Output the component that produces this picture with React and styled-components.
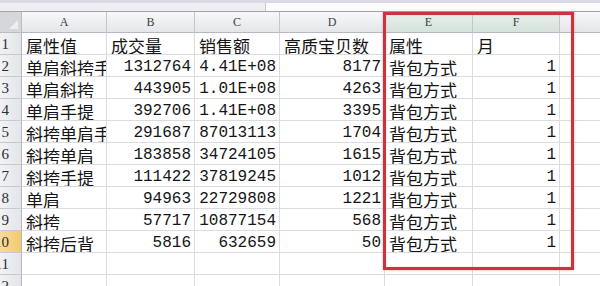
import React from 'react';
import styled, { createGlobalStyle } from 'styled-components';

const GlobalStyle = createGlobalStyle`
  html, body {
    margin: 0;
    padding: 0;
    background: #ffffff;
    overflow: hidden;
  }
  body {
    font-family: "Noto Sans CJK SC", "Liberation Sans", sans-serif;
  }
`

// column widths: row header, A..G
const COLS = [22, 85, 88, 85, 105, 88, 87, 100]
const LETTERS = ['A', 'B', 'C', 'D', 'E', 'F', 'G']
const SELECTED = ['E', 'F']

const rows = [
  ['属性值', '成交量', '销售额', '高质宝贝数', '属性', '月'],
  ['单肩斜挎手提', 1312764, '4.41E+08', 8177, '背包方式', 1],
  ['单肩斜挎', 443905, '1.01E+08', 4263, '背包方式', 1],
  ['单肩手提', 392706, '1.41E+08', 3395, '背包方式', 1],
  ['斜挎单肩手提', 291687, 87013113, 1704, '背包方式', 1],
  ['斜挎单肩', 183858, 34724105, 1615, '背包方式', 1],
  ['斜挎手提', 111422, 37819245, 1012, '背包方式', 1],
  ['单肩', 94963, 22729808, 1221, '背包方式', 1],
  ['斜挎', 57717, 10877154, 568, '背包方式', 1],
  ['斜挎后背', 5816, 632659, 50, '背包方式', 1],
  [],
  [],
]

const Page = styled.div`
  position: relative;
  width: 600px;
  height: 286px;
  overflow: hidden;
`

const FormulaStrip = styled.div`
  display: flex;
  height: 12px;
  box-sizing: border-box;
  border-top: 3px solid #dcd9e6;
  border-bottom: 1px solid #9ea2ad;
`

const NameBox = styled.div`
  width: 265px;
  background: #efeff3;
  border-right: 1px solid #c9cad2;
`

const FormulaInput = styled.div`
  flex: 1;
  background: #fbfbfc;
`

const Sheet = styled.div`
  display: grid;
  grid-template-columns: ${COLS.map(w => w + 'px').join(' ')};
  grid-template-rows: 21px;
  grid-auto-rows: 22px;
`

const Corner = styled.div`
  position: relative;
  background: #d6d7da;
  border-right: 1px solid #b9bcc2;
  border-bottom: 1px solid #b9bcc2;
  box-sizing: border-box;
  &::after {
    content: '';
    position: absolute;
    right: 3px;
    bottom: 3px;
    border-left: 9px solid transparent;
    border-bottom: 9px solid #eeeff1;
  }
`

const ColHead = styled.div`
  display: flex;
  align-items: center;
  justify-content: center;
  box-sizing: border-box;
  background: ${p => p.$selected
    ? 'linear-gradient(#e9f0ec, #d6e2dc)'
    : 'linear-gradient(#f7f8f9, #e4e6ea)'};
  border-right: 1px solid #c3c6cc;
  border-bottom: 1px solid #b4b8bf;
  font-family: "Liberation Serif", serif;
  font-size: 12px;
  color: #3c3f44;
  padding-top: 1px;
`

const RowHead = styled.div`
  display: flex;
  align-items: center;
  justify-content: flex-end;
  overflow: hidden;
  box-sizing: border-box;
  padding: 2px 12px 0 0;
  background: ${p => p.$active
    ? 'linear-gradient(90deg, #f8dc9a, #f3c96e)'
    : 'linear-gradient(90deg, #f1f2f4, #e3e5e9)'};
  border-right: 1px solid #b4b8bf;
  border-bottom: 1px solid #c6c9ce;
  font-family: "Liberation Serif", serif;
  font-size: 15px;
  color: #2c2f33;
  white-space: nowrap;
`

const Cell = styled.div`
  display: flex;
  align-items: center;
  justify-content: ${p => p.$num ? 'flex-end' : 'flex-start'};
  overflow: hidden;
  box-sizing: border-box;
  padding: 3px ${p => p.$num ? '3px' : '0'} 0 ${p => p.$num ? '0' : '4px'};
  border-right: 1px solid #d9dbde;
  border-bottom: 1px solid #d9dbde;
  white-space: nowrap;
  color: #151515;
  font-family: ${p => p.$num
    ? '"Liberation Mono", monospace'
    : '"Noto Sans CJK SC", "Liberation Sans", sans-serif'};
  font-size: ${p => p.$num ? '16px' : '17px'};
  line-height: 1;
`

const Highlight = styled.div`
  position: absolute;
  left: 383px;
  top: 12px;
  width: 191px;
  height: 258px;
  box-sizing: border-box;
  border: 3px solid #c8353c;
  box-shadow: 0 0 2px rgba(214, 90, 100, 0.6), inset 0 0 2px rgba(240, 170, 180, 0.7);
  pointer-events: none;
`

const isNum = v => typeof v === 'number' || /^[\d.E+]+$/.test(String(v))

function App() {
  return (
    <Page>
      <GlobalStyle />
      <FormulaStrip>
        <NameBox />
        <FormulaInput />
      </FormulaStrip>
      <Sheet>
        <Corner />
        {LETTERS.map(l => (
          <ColHead key={l} $selected={SELECTED.includes(l)}>{l}</ColHead>
        ))}
        {rows.map((row, r) => (
          <React.Fragment key={r}>
            <RowHead $active={r === 9}>{r + 1}</RowHead>
            {LETTERS.map((l, c) => {
              const v = row[c]
              const num = v !== undefined && isNum(v)
              return <Cell key={l} $num={num}>{v}</Cell>
            })}
          </React.Fragment>
        ))}
      </Sheet>
      <Highlight />
    </Page>
  );
}

export default App;
